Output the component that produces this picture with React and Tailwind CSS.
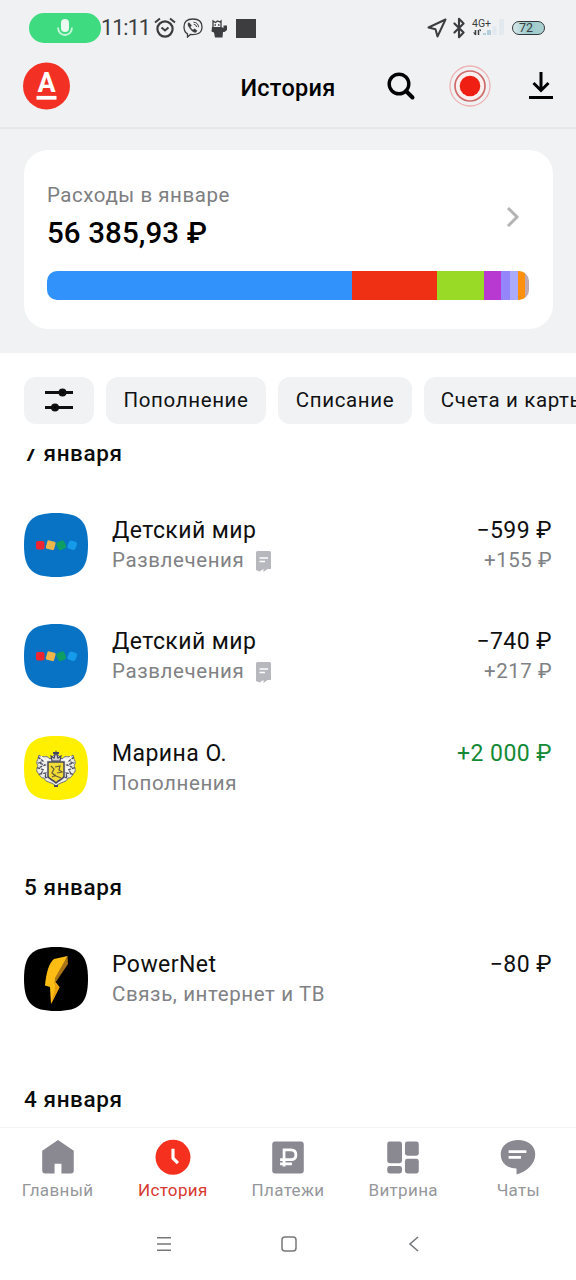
import { LuBluetooth } from "react-icons/lu";

const SEGMENTS = [
  { color: "#3192fc", width: 304.5 },
  { color: "#ef3015", width: 85.5 },
  { color: "#98da26", width: 46.5 },
  { color: "#b839d2", width: 17.5 },
  { color: "#9585fb", width: 9 },
  { color: "#aaabfa", width: 8 },
  { color: "#fd900c", width: 6.5 },
  { color: "#c0a9b0", width: 5 },
];

const SQUIRCLE = "M32 0C56 0 64 8 64 32S56 64 32 64 0 56 0 32 8 0 32 0Z";

function StatusBar() {
  return (
    <div className="flex h-14 items-center pl-[29px] pr-[31px] text-[#3c3d40]">
      <div className="flex h-[30px] w-[72px] items-center justify-center rounded-full bg-[#3fdb80]">
        <svg className="h-[20px] w-[18px]" viewBox="0 0 18 20" fill="none">
          <rect x="5" y="1" width="8" height="13" rx="4" fill="#eafaf0" />
          <path d="M2 9.5C2 19.5 16 19.5 16 9.5" stroke="#c9f5da" strokeWidth="1.8" />
        </svg>
      </div>
      <span className="w-[52px] whitespace-nowrap text-[21.500px] tracking-[-0.900px]">11:11</span>
      <svg className="ml-[1px] h-[22px] w-[22px]" viewBox="0 0 22 22" fill="none" stroke="currentColor">
        <circle cx="11" cy="12" r="7.6" strokeWidth="2.2" />
        <path d="M1 5.5 6 1.5M16 1.5l5 4" strokeWidth="2" />
        <path d="m7.5 10.5 3.5 3 3.5-3" strokeWidth="2" />
      </svg>
      <svg className="ml-[7px] h-[20px] w-[20px]" viewBox="0 0 20 20" fill="none" stroke="currentColor">
        <path d="M10 1C4 1 1 3.500 1 9c0 3.500 1 5.500 3.500 6.800V19l3-2.500C14.500 17 19 15 19 9c0-5.500-3-8-9-8Z" strokeWidth="1.3" />
        <path d="M6 4.500c-2 1-1 3 .5 5.500 1.500 2.300 3.500 4 5.500 4.500 1.500.2 2.500-1.700 1.500-2.500l-2-1.200-1.300 1C9 11.500 7.700 10 7.500 8.700l1.200-1.200Z" fill="currentColor" strokeWidth="0.3" />
        <path d="M10.500 4.200c3 .1 5 2 5 5M10.800 6.400c1.700.1 2.600 1 2.700 2.600" strokeWidth="1" />
      </svg>
      <svg className="ml-[8px] h-[19px] w-[17px]" viewBox="0 0 17 19" fill="none">
        <path d="M2 8V2l2.500 1.500L6.500 2 9 3l1-1v6" stroke="currentColor" strokeWidth="1.300" />
        <path d="M3.500 6h1.500M7 6h1.500" stroke="currentColor" strokeWidth="1.500" />
        <path d="M1 8h9.500l2 1V6.500h3.500V11l-2.500 2H12l-.5 5.500H4L3 13.500.5 12.500Z" fill="currentColor" />
      </svg>
      <div className="ml-[8px] h-[19px] w-[20px] bg-[#3d3d3f]" />

      <div className="ml-auto flex items-center">
        <svg className="-ml-[2px] h-[20px] w-[20px]" viewBox="0 0 20 20" fill="none" stroke="currentColor" strokeWidth="2" strokeLinejoin="round">
          <path d="M18.500 1.500 1.500 9.500l7 1.700 2 7.300Z" />
        </svg>
        <LuBluetooth className="ml-px h-[22px] w-[22px]" strokeWidth={2.300} />
        <svg className="ml-[2px] h-[20px] w-[33px]" viewBox="0 0 33 20">
          <text x="0" y="8.500" fontSize="10.500" fontFamily="Roboto" fill="currentColor">4G+</text>
          <path d="M3.500 12v5M6.500 17v-5" stroke="currentColor" strokeWidth="1.500" />
          <path d="M1 14.500h2.500V17.500ZM6.500 11.500h2.500v2Z" fill="currentColor" />
          <path d="M11 17v-2h3v2ZM15 17v-5h4v5Z" fill="#b5d0dc" />
          <path d="M20.500 17V8h4v9ZM27 17V1h5v16Z" fill="#e2eaef" />
        </svg>
        <div className="ml-[7px] flex h-[14px] w-[33px] items-center overflow-hidden rounded-full border-[1.500px] border-[#33383a] bg-linear-to-r from-[#d7e7e9] via-[#9acacb] to-[#acd0d1] pl-[6px]">
          <span className="text-[12.500px] leading-none">72</span>
        </div>
      </div>
    </div>
  );
}

function Header() {
  return (
    <div className="grid h-[71px] grid-cols-3 items-start px-6 pt-[6px]">
      <svg className="-ml-px h-[48px] w-[47px]" viewBox="0 0 47 48">
        <circle cx="23.500" cy="24" r="23.500" fill="#f23024" />
        <text x="23.500" y="30" textAnchor="middle" fontFamily="Roboto" fontWeight="700" fontSize="27" fill="#fff">А</text>
        <path d="M13.500 35.800h20" stroke="#fff" strokeWidth="3.800" />
      </svg>
      <h1 className="mt-[11px] text-center text-[23.500px] leading-[30px] font-medium tracking-[0.300px]">История</h1>
      <div className="flex h-12 items-center justify-end">
        <svg className="h-[30px] w-[30px] shrink-0" viewBox="0 0 30 30" fill="none" stroke="#000" strokeWidth="3.400">
          <circle cx="13" cy="13" r="9.800" />
          <path d="m20 20 6.500 6.500" strokeWidth="4" strokeLinecap="round" />
        </svg>
        <svg className="ml-[33px] h-[42px] w-[42px] shrink-0" viewBox="0 0 42 42" fill="none">
          <circle cx="21" cy="21" r="20" stroke="#efb2b3" strokeWidth="1.300" />
          <circle cx="21" cy="21" r="15" fill="#fbf0ef" stroke="#cf6b6a" strokeWidth="1.700" />
          <circle cx="21" cy="21" r="10.300" fill="#ef2013" />
        </svg>
        <svg className="-mr-px mb-[1px] ml-[38px] h-[27px] w-[24px] shrink-0" viewBox="0 0 24 27" fill="none" stroke="#000" strokeWidth="3">
          <path d="M12 0v18M4.500 11l7.500 7.500 7.500-7.500M0 25.500h24" />
        </svg>
      </div>
    </div>
  );
}

function SpendingCard() {
  return (
    <section className="h-[226px] border-t-2 border-[#e5e7e8] bg-[#f0f2f3] px-6 pt-[21px]">
      <div className="h-[179px] w-[529px] rounded-3xl bg-white px-[23px] pt-[30px]">
        <div className="flex items-center justify-between">
          <div>
            <p className="text-[20.500px] leading-[30px] tracking-[0.550px] text-[#7d7e81]">Расходы в январе</p>
            <p className="mt-[5px] text-[29.500px] leading-9 font-medium tracking-[0.100px]">56 385,93 ₽</p>
          </div>
          <svg className="mt-[2px] mr-[10px] h-[22px] w-[14px]" viewBox="0 0 14 22" fill="none" stroke="#b3b3b5" strokeWidth="3">
            <path d="m2 2 9 9-9 9" />
          </svg>
        </div>
        <div className="mt-[20px] flex h-[29px] w-[482px] overflow-hidden rounded-[10px]">
          {SEGMENTS.map((s) => (
            <div key={s.color} className="shrink-0" style={{ width: s.width, backgroundColor: s.color }} />
          ))}
        </div>
      </div>
    </section>
  );
}

function Chip({ children, className }) {
  return (
    <button className={`flex h-[47px] shrink-0 items-center justify-center rounded-xl bg-[#f0f2f4] text-[20.500px] tracking-[0.650px] whitespace-nowrap text-[#111214] ${className}`}>
      {children}
    </button>
  );
}

function Filters() {
  return (
    <div className="flex h-[96px] gap-3 overflow-hidden pt-[23.500px] pl-6">
      <Chip className="w-[70px]">
        <svg className="h-[24px] w-[28px]" viewBox="0 0 28 24" stroke="#111" strokeWidth="3">
          <path d="M0 4.500h28M0 19.500h28" />
          <circle cx="17.500" cy="4.500" r="2.500" />
          <circle cx="10" cy="19.500" r="2.500" />
        </svg>
      </Chip>
      <Chip className="w-[160px]">Пополнение</Chip>
      <Chip className="w-[134px]">Списание</Chip>
      <Chip className="w-[179px]">Счета и карты</Chip>
    </div>
  );
}

function DetmirLogo() {
  return (
    <svg className="h-16 w-16 shrink-0" viewBox="0 0 64 64">
      <path d={SQUIRCLE} fill="#0873c4" />
      <rect x="12" y="28" width="8.500" height="8.500" rx="2" fill="#ee2430" />
      <rect x="22.500" y="28" width="8.500" height="8.500" rx="1.500" fill="#eeb64a" transform="rotate(15 26.700 32.200)" />
      <rect x="33" y="28" width="8.500" height="8.500" rx="2" fill="#0e9e63" transform="rotate(-25 37.200 32.200)" />
      <rect x="44" y="28" width="8.500" height="8.500" rx="2.500" fill="#159bea" transform="rotate(20 48.200 32.200)" />
    </svg>
  );
}

function TinkoffLogo() {
  return (
    <svg className="h-16 w-16 shrink-0" viewBox="0 0 64 64" fill="none">
      <path d={SQUIRCLE} fill="#fff000" />
      <path d="M26 23c-4-5-7 0-11-4 0 4-3 5-2 9 2 2-1 4 0 8 3 1 2 6 7 6 2 5 6 3 12 8 6-5 10-3 12-8 5 0 4-5 7-6 1-4-2-6 0-8 1-4-2-5-2-9-4 4-7-1-11 4l-6-6Z" fill="#eeeee6" stroke="#6b6d7c" strokeWidth="1" />
      <path d="m14 21 5 4-4 2 6 2-7 3 6 2-4 4 6-1-1 5 5-2M50 21l-5 4 4 2-6 2 7 3-6 2 4 4-6-1 1 5-5-2" stroke="#4a4d63" strokeWidth="1.300" strokeDasharray="3 1" />
      <path d="m17 20 4 5 3-2M47 20l-4 5-3-2M18 31l4 2-3 3M46 31l-4 2 3 3" stroke="#fff" strokeWidth="1.200" />
      <path d="M24 26h16v14c0 3-4 3-8 7-4-4-8-4-8-7Z" fill="#f2dc36" stroke="#45455c" strokeWidth="1.500" />
      <path d="m27 30 3 3-2 4 4 3 5 2M31 31l5-1-1 4 3 2-5 1M28 41l4-2" stroke="#665f35" strokeWidth="1.200" />
      <path d="m28 25-1-5 3 2 2-6 2 6 3-2-1 5Z" fill="#d3d3d0" stroke="#45455c" strokeWidth="1.200" />
      <path d="M29 17h6M30 50h4" stroke="#45455c" strokeWidth="2" />
    </svg>
  );
}

function PowerNetLogo() {
  return (
    <svg className="h-16 w-16 shrink-0" viewBox="0 0 64 64">
      <path d={SQUIRCLE} fill="#000" />
      <path d="M43.500 9 31.500 35l4 5L27 57l-1-17-5-1.500C22 26 25 16 30 12Z" fill="#fdbd15" />
      <path d="m43.500 9 .5 8-13.500 20 .5-6Z" fill="#a97516" />
      <path d="m31 36 4.500 4.500L27 57l4-15Z" fill="#e89d0a" />
    </svg>
  );
}

function NoteIcon() {
  return (
    <svg className="mt-[3px] ml-3 h-[21px] w-[15px]" viewBox="0 0 15 21">
      <path d="M1.500 0h12Q15 0 15 1.500V18h-3.500L7.500 21v-3l-4 2.500L0 19V1.500Q0 0 1.500 0Z" fill="#b7b7be" />
      <path d="M3.500 7h8.500M3.500 10.500h5.500" stroke="#fff" strokeWidth="1.500" />
    </svg>
  );
}

function DateHeading({ children, className = "" }) {
  return <h2 className={`text-[22.500px] leading-[30px] font-medium tracking-[0.600px] text-[#0b0b0c] ${className}`}>{children}</h2>;
}

function Operation({ logo, title, category, amount, bonus, note, income }) {
  return (
    <div className="flex h-16 items-center">
      {logo}
      <div className="ml-6 grow">
        <p className="pt-px text-[23px] leading-[30px] tracking-[0.450px] text-[#0f0f10]">{title}</p>
        <div className="-mt-px flex h-[30px] items-center">
          <span className="text-[20.500px] leading-[30px] tracking-[0.600px] text-[#808184]">{category}</span>
          {note && <NoteIcon />}
        </div>
      </div>
      <div className="h-[60px] text-right">
        <p className={`pt-px text-[23px] leading-[30px] tracking-[0.450px] ${income ? "text-[#148a37]" : "text-[#0f0f10]"}`}>{amount}</p>
        {bonus && <p className="-mt-px text-[20.500px] leading-[30px] tracking-[0.500px] text-[#808184]">{bonus}</p>}
      </div>
    </div>
  );
}

function Operations() {
  return (
    <main className="h-[678px] overflow-hidden px-6">
      <DateHeading className="-mt-[11px]">7 января</DateHeading>
      <div className="mt-[45px] flex flex-col gap-[47.400px]">
        <Operation logo={<DetmirLogo />} title="Детский мир" category="Развлечения" amount="−599 ₽" bonus="+155 ₽" note />
        <Operation logo={<DetmirLogo />} title="Детский мир" category="Развлечения" amount="−740 ₽" bonus="+217 ₽" note />
        <Operation logo={<TinkoffLogo />} title="Марина О." category="Пополнения" amount="+2 000 ₽" income />
      </div>
      <DateHeading className="mt-[72.200px] mb-[45px]">5 января</DateHeading>
      <Operation logo={<PowerNetLogo />} title="PowerNet" category="Связь, интернет и ТВ" amount="−80 ₽" />
      <DateHeading className="mt-[73px]">4 января</DateHeading>
    </main>
  );
}

const TABS = [
  {
    label: "Главный",
    icon: <path d="m18 1 16 11v20q0 3-3 3H21.500V25h-7v10H5q-3 0-3-3V12Z" fill="#8a8991" />,
  },
  {
    label: "История",
    active: true,
    icon: (
      <>
        <circle cx="18" cy="18.500" r="17.700" fill="#f5301f" />
        <path d="M18 10v9.500l5 5" fill="none" stroke="#fff" strokeWidth="3.200" />
      </>
    ),
  },
  {
    label: "Платежи",
    icon: (
      <>
        <rect x="2" y="2.500" width="32" height="32.500" rx="3" fill="#8a8991" />
        <path d="M14 28V11h7q5 0 5 5t-5 5H10M10 25.200h12" fill="none" stroke="#fff" strokeWidth="2.800" />
      </>
    ),
  },
  {
    label: "Витрина",
    icon: (
      <g fill="#8a8991">
        <rect x="2" y="2.500" width="15" height="22" rx="2.500" />
        <rect x="20" y="2.500" width="14" height="14.500" rx="2.500" />
        <rect x="2" y="27.500" width="15" height="7.500" rx="2.500" />
        <rect x="20" y="20" width="14" height="15" rx="2.500" />
      </g>
    ),
  },
  {
    label: "Чаты",
    icon: (
      <>
        <path d="M18 1C8 1 .5 7 .5 15.500S7 30 16.500 30v6C26 33.500 35.500 26 35.500 15.500 35.500 7 28 1 18 1Z" fill="#8a8991" />
        <path d="M8.500 12.800h18M8.500 18.700h12.500" stroke="#fff" strokeWidth="2.800" />
      </>
    ),
  },
];

function TabBar() {
  return (
    <nav className="grid h-[81px] grid-cols-5 border-t border-[#f3f3f4] pt-[11px]">
      {TABS.map((tab) => (
        <div key={tab.label} className="flex flex-col items-center">
          <svg className="h-9 w-9" viewBox="0 0 36 36.500">{tab.icon}</svg>
          <span className={`mt-[5px] text-[17px] leading-5 tracking-[0.350px] ${tab.active ? "text-[#d8382f]" : "text-[#96979b]"}`}>{tab.label}</span>
        </div>
      ))}
    </nav>
  );
}

function SystemNav() {
  return (
    <div className="flex h-[71px] items-center justify-between pr-[154px] pl-[156px]">
      <svg className="h-4 w-4" viewBox="0 0 16 16" stroke="#77787a" strokeWidth="1.500">
        <path d="M1 1.700h14M1 8h14M1 14.300h14" />
      </svg>
      <svg className="h-4 w-4" viewBox="0 0 16 16" fill="none" stroke="#77787a" strokeWidth="1.500">
        <rect x="1" y="1" width="14" height="14" rx="3" />
      </svg>
      <svg className="h-4 w-4" viewBox="0 0 16 16" fill="none" stroke="#77787a" strokeWidth="1.600">
        <path d="M12 1 4 8l8 7" />
      </svg>
    </div>
  );
}

export default function App() {
  return (
    <div className="h-[1280px] w-[576px] overflow-hidden bg-white font-['Roboto',sans-serif] text-black">
      <header className="bg-[#eff1f3]">
        <StatusBar />
        <Header />
      </header>
      <SpendingCard />
      <Filters />
      <Operations />
      <TabBar />
      <SystemNav />
    </div>
  );
}
